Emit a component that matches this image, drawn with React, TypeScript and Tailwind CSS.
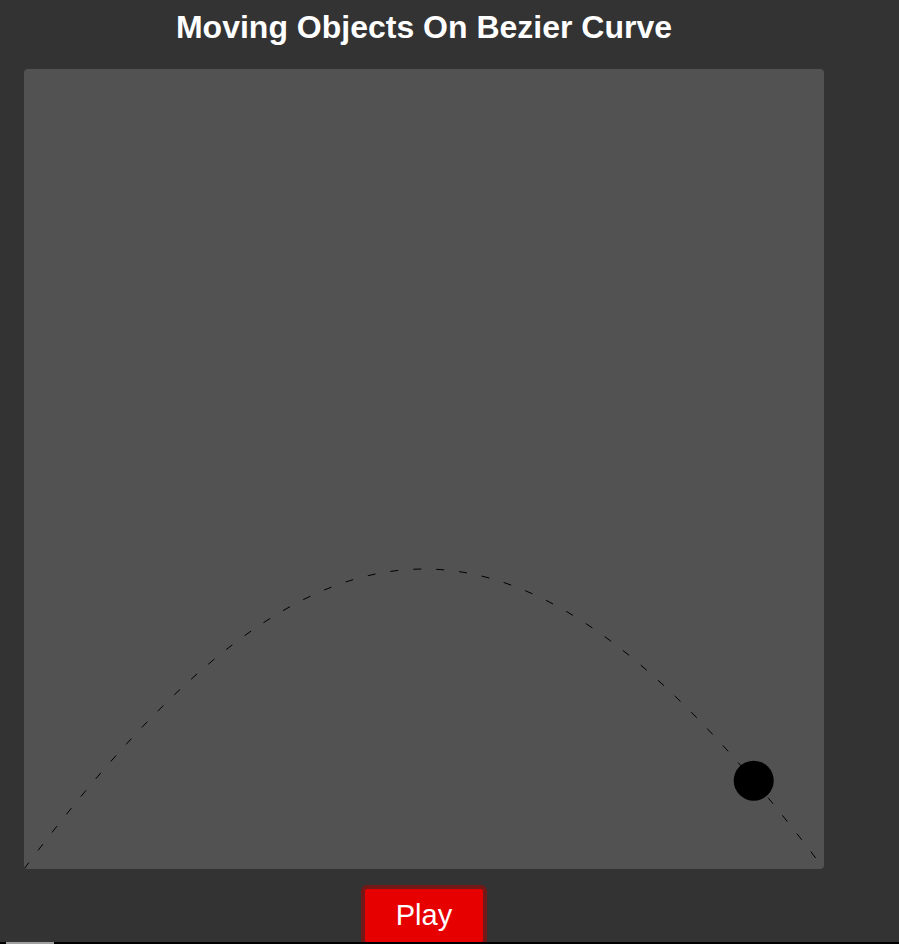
import React from "react";

export default function App() {
  return (
    <div className="relative min-h-screen w-full bg-[#333333] overflow-hidden" style={{ height: 944 }}>
      <div
        className="flex w-[848px] flex-col items-center pt-[9px]"
        style={{ fontFamily: '"Liberation Sans", Arial, sans-serif' }}
      >
        <h1 className="m-0 text-[32px] font-bold leading-[37px] text-white">
          Moving Objects On Bezier Curve
        </h1>
        <div className="mt-[23px] h-[800px] w-[800px] overflow-hidden rounded-[4px] bg-[#525252]">
          <svg width="800" height="800" viewBox="0 0 800 800" className="block">
            <path
              d="M0 800 C300 400 500 400 800 800"
              fill="none"
              stroke="#000"
              strokeWidth="1"
              strokeDasharray="8 15"
            />
            <circle cx="729.7" cy="711.7" r="20" fill="#000" />
          </svg>
        </div>
        <button className="mt-[16px] rounded-[6px] border-[4px] border-[#741818] bg-[#e60000] px-[31px] py-[10px] text-[29px] leading-[33px] text-white">
          Play
        </button>
      </div>
      <div className="absolute bottom-0 left-0 h-[2px] w-full bg-black">
        <div className="absolute left-[6px] top-0 h-[2px] w-[48px] bg-[#a0a0a0]" />
      </div>
    </div>
  );
}
